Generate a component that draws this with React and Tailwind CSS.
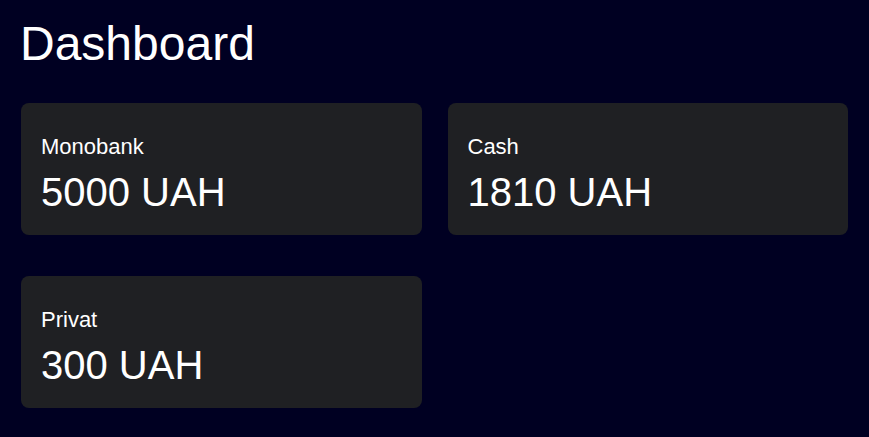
import React from "react";

const accounts = [
  { id: 1, name: "Monobank", balance: 5000 },
  { id: 2, name: "Cash", balance: 1810 },
  { id: 3, name: "Privat", balance: 300 },
];

const App = () => {
  return (
    <div className="min-h-screen bg-[#000022] px-[21px] pt-[16px] font-['Liberation_Sans',Arial,sans-serif] text-white">
      <h1 className="-ml-px text-[48px] leading-[55px] font-normal">Dashboard</h1>

      <div className="mt-[32px] grid grid-cols-2 gap-x-[26px] gap-y-[41px]">
        {accounts.map((account) => (
          <div
            key={account.id}
            className="rounded-lg bg-[#1f2023] px-5 pt-[31px] pb-[20px]"
          >
            <p className="text-[22px] leading-[25px]">{account.name}</p>
            <p className="mt-[10px] text-[40px] leading-[46px]">
              {account.balance} UAH
            </p>
          </div>
        ))}
      </div>
    </div>
  );
};

export default App;
